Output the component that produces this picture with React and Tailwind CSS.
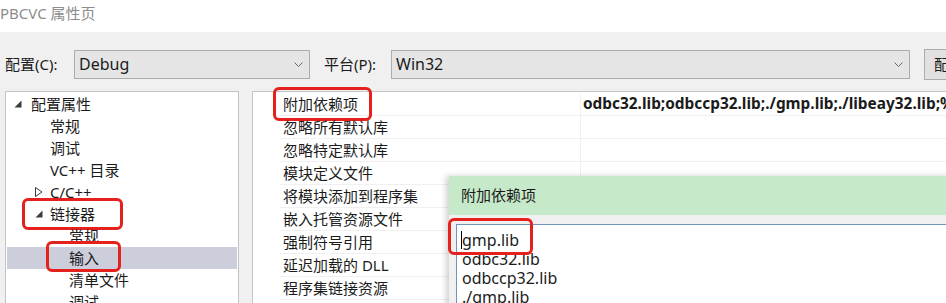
import React from "react";

function Chevron() {
  return (
    <svg width="9" height="5" viewBox="0 0 9 5" className="shrink-0">
      <polyline points="0.5,0.5 4.5,4.5 8.5,0.5" fill="none" stroke="#6a6a6a" strokeWidth="1" />
    </svg>
  );
}

function TriDown() {
  return (
    <svg width="8" height="8" viewBox="0 0 8 8">
      <polygon points="7.5,0.5 7.5,7.5 0.5,7.5" fill="#3c3c3c" />
    </svg>
  );
}

function TriRight() {
  return (
    <svg width="8" height="10" viewBox="0 0 8 10">
      <polygon points="0.5,0.5 7,5 0.5,9.5" fill="none" stroke="#3c3c3c" strokeWidth="1" />
    </svg>
  );
}

function RedBox({ className }) {
  return (
    <div
      className={
        "pointer-events-none absolute rounded-[6px] border-[3.5px] border-[#e5211d] " + className
      }
    />
  );
}

function TreeRow({ level, icon, selected, children, box }) {
  const pl = level === 0 ? "pl-[7px]" : level === 1 ? "pl-[28px]" : "pl-[62px]";
  const iw = level === 0 ? "w-[17px]" : "w-[15px]";
  return (
    <div
      className={
        "relative mx-[1px] flex h-[22px] items-center text-[15px] leading-[22px] " +
        pl +
        (selected ? " bg-[#cccedb]" : "")
      }
    >
      {icon !== undefined && (
        <span className={"flex shrink-0 items-center " + iw}>
          {icon === "down" ? <TriDown /> : icon === "right" ? <TriRight /> : null}
        </span>
      )}
      <span className="whitespace-nowrap">{children}</span>
      {box}
    </div>
  );
}

function PropRow({ name, value, box }) {
  return (
    <div className="flex h-[23px] border-b border-[#f0f0f0]">
      <div className="relative flex w-[300px] shrink-0 items-center pl-[3px] text-[15px] whitespace-nowrap">
        {name}
        {box}
      </div>
      <div className="flex min-w-0 flex-1 items-center overflow-hidden border-l border-[#f0f0f0] pl-[2px] text-[15.4px] font-bold whitespace-nowrap">
        {value}
      </div>
    </div>
  );
}

export default function App() {
  return (
    <div className="relative h-[303px] w-[946px] overflow-hidden bg-[#f0f0f0] font-['Noto_Sans','Noto_Sans_CJK_SC',sans-serif] text-[#1b1b1b]">
      {/* title bar */}
      <div className="flex h-[32px] items-start bg-white pt-[2px] text-[15px] leading-[22px] text-[#8d8d8d] whitespace-nowrap">
        PBCVC 属性页
      </div>

      {/* config row */}
      <div className="mt-[17px] flex h-[30px] items-center pl-[5px] whitespace-nowrap">
        <span className="w-[69px] shrink-0 text-[15px]">配置(C):</span>
        <div className="flex h-[29px] w-[236px] shrink-0 items-center justify-between border border-[#adadad] bg-[#e5e5e5] pr-[6px] pl-[4px] text-[16px]">
          <span>Debug</span>
          <Chevron />
        </div>
        <span className="ml-[14px] w-[67px] shrink-0 text-[15px]">平台(P):</span>
        <div className="flex h-[29px] w-[519px] shrink-0 items-center justify-between border border-[#adadad] bg-[#e5e5e5] pr-[6px] pl-[4px] text-[16px]">
          <span>Win32</span>
          <Chevron />
        </div>
        <div className="ml-[14px] flex h-[31px] w-[120px] shrink-0 items-center border border-[#adadad] bg-[#e1e1e1] pl-[9px] text-[15px]">
          配置管理器(O)...
        </div>
      </div>

      {/* panels */}
      <div className="mt-[12px] flex h-[212px]">
        {/* tree */}
        <div className="ml-[5px] w-[234px] shrink-0 border border-b-0 border-[#c4c4c4] bg-white pt-[1px]">
          <TreeRow level={0} icon="down">配置属性</TreeRow>
          <TreeRow level={1} icon="none">常规</TreeRow>
          <TreeRow level={1} icon="none">调试</TreeRow>
          <TreeRow level={1} icon="none">VC++ 目录</TreeRow>
          <TreeRow level={1} icon="right">C/C++</TreeRow>
          <TreeRow
            level={1}
            icon="down"
            box={<RedBox className="top-[-5px] left-[15px] h-[32px] w-[101px]" />}
          >
            链接器
          </TreeRow>
          <TreeRow level={2}>常规</TreeRow>
          <TreeRow
            level={2}
            selected
            box={<RedBox className="top-[-6px] left-[39px] h-[31px] w-[75px]" />}
          >
            输入
          </TreeRow>
          <TreeRow level={2}>清单文件</TreeRow>
          <TreeRow level={2}>调试</TreeRow>
        </div>

        {/* property grid */}
        <div className="ml-[13px] min-w-0 flex-1 border-t border-l border-[#c4c4c4] bg-white pt-[1px] pl-[27px]">
          <PropRow
            name="附加依赖项"
            value="odbc32.lib;odbccp32.lib;./gmp.lib;./libeay32.lib;%(AdditionalDependencies)"
            box={<RedBox className="top-[-6px] left-[-7px] h-[34px] w-[99px]" />}
          />
          <PropRow name="忽略所有默认库" value="" />
          <PropRow name="忽略特定默认库" value="" />
          <PropRow name="模块定义文件" value="" />
          <PropRow name="将模块添加到程序集" value="" />
          <PropRow name="嵌入托管资源文件" value="" />
          <PropRow name="强制符号引用" value="" />
          <PropRow name="延迟加载的 DLL" value="" />
          <PropRow name="程序集链接资源" value="" />
        </div>
      </div>

      {/* popup dialog */}
      <div className="absolute top-[176px] left-[449px] h-[140px] w-[520px] bg-[#f0f0f0] shadow-[-3px_0_6px_rgba(0,0,0,0.18)]">
        <div className="flex h-[39px] items-center bg-[#c6e9c9] pl-[12px] text-[15px]">附加依赖项</div>
        <div className="pt-[9px] pl-[7px]">
          <div className="h-[120px] border border-[#6f95bf] bg-white pt-[6px] pl-[5px] text-[16px] leading-[19px]">
            <div className="relative w-fit">
              <span className="absolute top-[0px] left-[-1px] h-[18px] w-[1px] bg-black" />
              gmp.lib
              <RedBox className="top-[-13px] left-[-14px] h-[37px] w-[85px]" />
            </div>
            <div>odbc32.lib</div>
            <div>odbccp32.lib</div>
            <div>./gmp.lib</div>
          </div>
        </div>
      </div>
    </div>
  );
}
